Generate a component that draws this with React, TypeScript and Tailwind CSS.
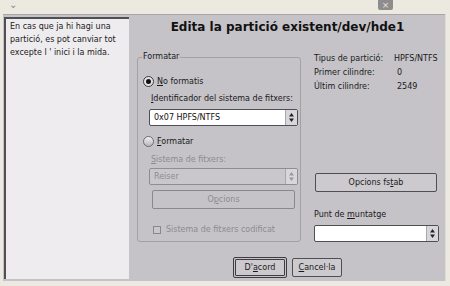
import React from 'react';

const font = { fontFamily: '"DejaVu Sans", Verdana, sans-serif' };

function Spinner({ dim }: { dim?: boolean }) {
  const c = dim ? '#9a989c' : '#222';
  return (
    <div className="flex w-[12px] items-center justify-center border-l border-[#a9a7ab] bg-[#d8d6da] self-stretch">
      <svg width="5" height="9" viewBox="0 0 5 9">
        <path d="M2.5 0 L5 3.5 L0 3.5 Z" fill={c} />
        <path d="M2.5 9 L5 5.5 L0 5.5 Z" fill={c} />
      </svg>
    </div>
  );
}

function Combo({ text, dim, className }: { text: string; dim?: boolean; className: string }) {
  return (
    <div
      className={`flex border rounded-[2px] overflow-hidden ${
        dim ? 'bg-[#c9c7cb] border-[#8f8d92]' : 'bg-white border-[#4f4e52]'
      } ${className}`}
    >
      <div className={`flex-1 flex items-center pl-[4px] ${dim ? 'text-[#8d8b90]' : 'text-[#111]'}`}>{text}</div>
      <Spinner dim={dim} />
    </div>
  );
}

function Radio({ checked }: { checked?: boolean }) {
  return (
    <div
      className={`w-[11px] h-[11px] rounded-full border flex items-center justify-center ${
        checked ? 'border-[#3a393c] bg-[#e4e2e6]' : 'border-[#6d6c70] bg-gradient-to-b from-[#f2f1f3] to-[#b8b6bb]'
      }`}
    >
      {checked && <div className="w-[5px] h-[5px] rounded-full bg-[#111]" />}
    </div>
  );
}

export default function App() {
  return (
    <div className="w-[450px] h-[286px] bg-[#ece9e1] flex flex-col text-[8px] leading-[10px] text-[#1a1a1a] overflow-hidden" style={font}>
      {/* title bar remains */}
      <div className="h-[14px] flex items-start">
        <div className="ml-[9px] mt-[1px] text-[#8a8886] text-[10px] leading-[8px]">⌄</div>
        <div className="flex-1" />
        <div className="mr-[57px] w-[15px] h-[10px] bg-[#8f8d8b] rounded-b-[2px] flex items-center justify-center text-[#e6e4e2] text-[9px] leading-none">
          ×
        </div>
      </div>

      <div className="flex-1 flex">
        <div className="ml-[3px] w-[442px] bg-[#c5c3c8] border-t border-[#a8a6a9] flex">
          {/* left help panel */}
          <div className="ml-[1px] mt-[2px] mb-[2px] w-[125px] bg-[#eeecef] border-l-2 border-t-2 border-[#505052] pl-[4px] pt-[1px] leading-[13px]">
            En cas que ja hi hagi una
            <br />
            partició, es pot canviar tot
            <br />
            excepte l ' inici i la mida.
          </div>

          <div className="flex-1 flex flex-col">
            <div className="h-[22px] pt-[3px] text-center font-bold text-[12px] leading-[18px] text-[#111] pl-[1px]">
              Edita la partició existent/dev/hde1
            </div>

            <div className="flex mt-[15px]">
              <fieldset className="ml-[8px] w-[164px] h-[190px] border border-[#a3a1a6] rounded-[3px] px-0">
                <legend className="ml-[4px] px-[1px] leading-[10px]">Formatar</legend>
                <div className="flex items-center mt-[14px] ml-[5px]">
                  <Radio checked />
                  <span className="ml-[3px]">
                    <u>N</u>o formatis
                  </span>
                </div>
                <div className="mt-[7px] ml-[13px]">
                  <u>I</u>dentificador del sistema de fitxers:
                </div>
                <Combo text="0x07 HPFS/NTFS" className="mt-[5px] ml-[11px] w-[149px] h-[17px]" />
                <div className="flex items-center mt-[10px] ml-[5px]">
                  <Radio />
                  <span className="ml-[3px]">
                    <u>F</u>ormatar
                  </span>
                </div>
                <div className="mt-[8px] ml-[13px] text-[#8d8b90]">
                  <u>S</u>istema de fitxers:
                </div>
                <Combo text="Reiser" dim className="mt-[3px] ml-[11px] w-[149px] h-[17px]" />
                <div className="mt-[5px] ml-[14px] w-[143px] h-[19px] border border-[#8a888d] rounded-[2px] flex items-center justify-center text-[#8d8b90]">
                  O<u>p</u>cions
                </div>
                <div className="flex items-center mt-[16px] ml-[15px] text-[#8d8b90]">
                  <div className="w-[8px] h-[8px] border border-[#8a888d] bg-[#c9c7cb]" />
                  <span className="ml-[5px]">Sistema de fitxers codificat</span>
                </div>
              </fieldset>

              <div className="ml-[13px] w-[124px] flex flex-col">
                <div className="flex leading-[14px]">
                  <div className="w-[80px]">
                    Tipus de partició:
                    <br />
                    Primer cilindre:
                    <br />
                    Últim cilindre:
                  </div>
                  <div>
                    HPFS/NTFS
                    <br />
                    <span className="ml-[3px]">0</span>
                    <br />
                    <span className="ml-[3px]">2549</span>
                  </div>
                </div>
                <div className="mt-[79px] ml-[1px] w-[122px] h-[19px] border border-[#4f4e52] rounded-[2px] bg-[#cccace] flex items-center justify-center">
                  Opcions fs<u>t</u>ab
                </div>
                <div className="mt-[18px]">
                  Punt de <u>m</u>untatge
                </div>
                <Combo text="" className="mt-[5px] w-[125px] h-[17px]" />
              </div>
            </div>

            <div className="flex mt-[15px] ml-[104px]">
              <div className="w-[54px] h-[21px] border border-[#3e3d41] rounded-[2px] p-[1px]">
                <div className="w-full h-full border border-[#3e3d41] rounded-[1px] bg-[#cccace] flex items-center justify-center">
                  D'<u>a</u>cord
                </div>
              </div>
              <div className="ml-[5px] w-[50px] h-[19px] mt-[1px] border border-[#4f4e52] rounded-[2px] bg-[#cccace] flex items-center justify-center">
                <u>C</u>ancel·la
              </div>
            </div>
          </div>
        </div>
        <div className="w-[1px] bg-[#dedcd8]" />
      </div>
      <div className="h-[5px]" />
    </div>
  );
}
